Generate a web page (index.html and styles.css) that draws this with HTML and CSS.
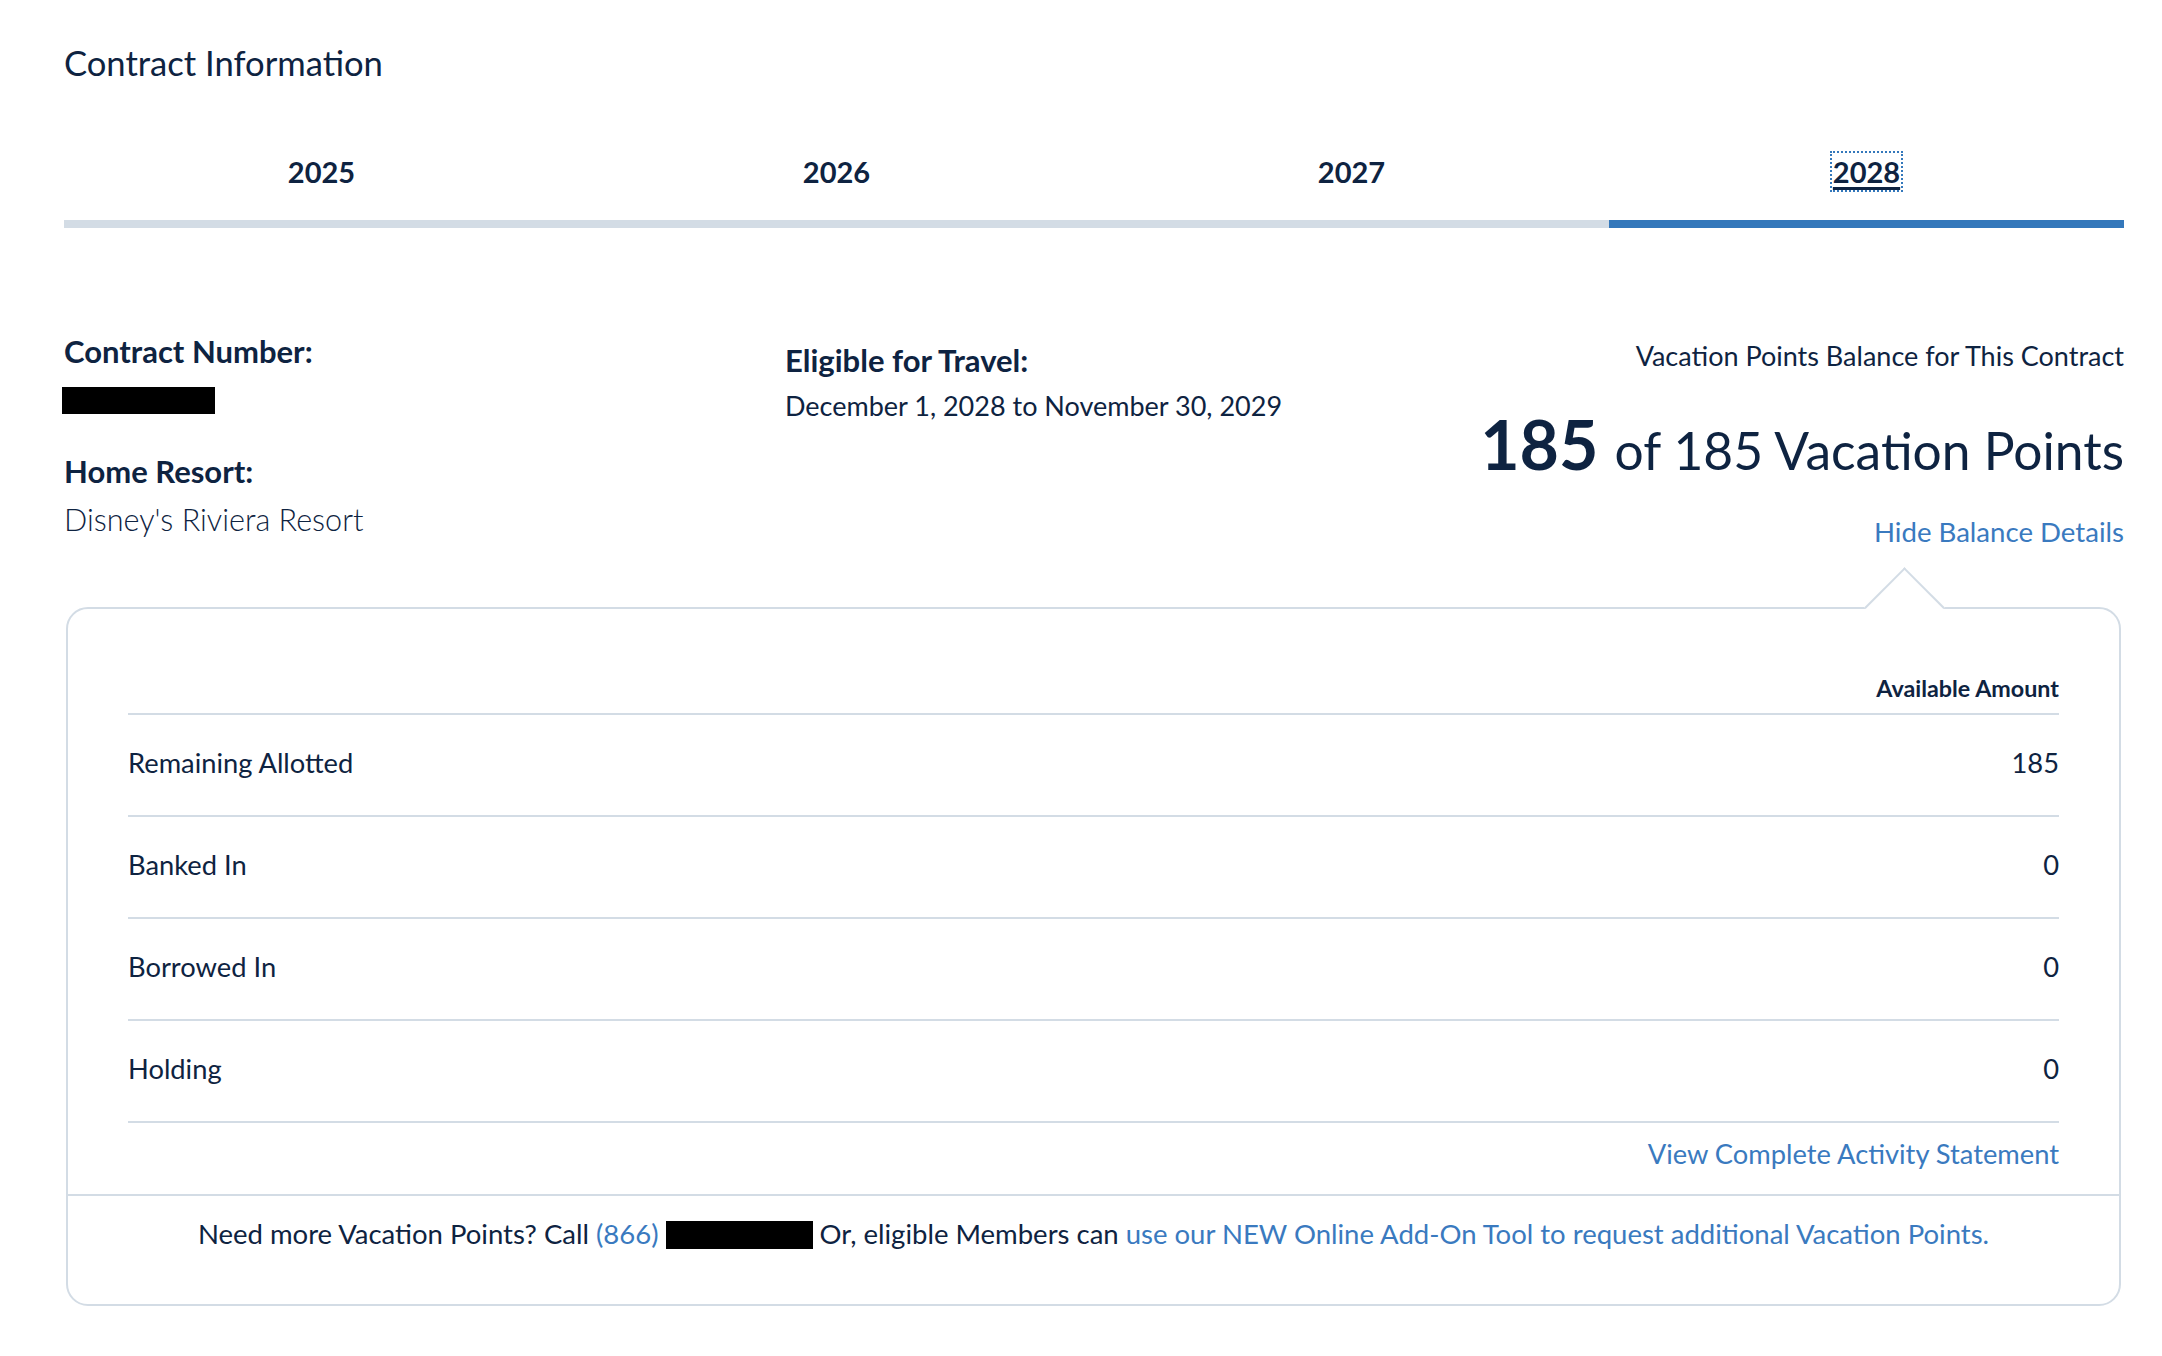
FILE: index.html
```html
<!DOCTYPE html>
<html lang="en">
<head>
    <meta charset="UTF-8">
    <meta name="viewport" content="width=device-width, initial-scale=1.0">
    <title>Contract Information</title>
    <link rel="stylesheet" href="styles.css">
</head>
<body>
    <div class="contract-info">
        <h2 class="page-title">Contract Information</h2>

        <ul class="year-tabs">
            <li><a href="#">2025</a></li>
            <li><a href="#">2026</a></li>
            <li><a href="#">2027</a></li>
            <li class="active"><a href="#">2028</a></li>
        </ul>

        <div class="contract-details">
            <div class="detail-col">
                <div class="detail-label">Contract Number:</div>
                <span class="redacted redacted-number"></span>
                <div class="detail-label home-label">Home Resort:</div>
                <div class="detail-value resort-name">Disney's Riviera Resort</div>
            </div>

            <div class="detail-col travel-col">
                <div class="detail-label">Eligible for Travel:</div>
                <div class="detail-value travel-dates">December 1, 2028 to November 30, 2029</div>
            </div>

            <div class="detail-col balance-col">
                <div class="balance-caption">Vacation Points Balance for This Contract</div>
                <div class="points-total">
                    <strong>185</strong>
                    <span>of 185 Vacation Points</span>
                </div>
                <a href="#" class="link toggle-link">Hide Balance Details</a>
            </div>
        </div>

        <div class="balance-box">
            <span class="box-caret"></span>
            <div class="balance-body">
                <table class="balance-table">
                    <thead>
                        <tr>
                            <th></th>
                            <th>Available Amount</th>
                        </tr>
                    </thead>
                    <tbody>
                        <tr>
                            <td>Remaining Allotted</td>
                            <td>185</td>
                        </tr>
                        <tr>
                            <td>Banked In</td>
                            <td>0</td>
                        </tr>
                        <tr>
                            <td>Borrowed In</td>
                            <td>0</td>
                        </tr>
                        <tr>
                            <td>Holding</td>
                            <td>0</td>
                        </tr>
                    </tbody>
                </table>
                <div class="statement-link">
                    <a href="#" class="link">View Complete Activity Statement</a>
                </div>
            </div>
            <div class="balance-footer">
                Need more Vacation Points? Call <a href="#" class="link">(866)</a>
                <span class="redacted redacted-phone"></span>
                Or, eligible Members can <a href="#" class="link">use our NEW Online Add-On Tool to request additional Vacation Points.</a>
            </div>
        </div>
    </div>
</body>
</html>
```

FILE: styles.css
```css
* {
    margin: 0;
    padding: 0;
    box-sizing: border-box;
}

body {
    font-family: Lato, 'Noto Sans', sans-serif;
    color: #0e2341;
    background: #fff;
}

.contract-info {
    padding: 0 38px 48px 64px;
}

.page-title {
    font-size: 34.6px;
    font-weight: 400;
    line-height: 40px;
    padding-top: 43px;
}

.link {
    color: #3a7abf;
    text-decoration: none;
}

/* year tabs */
.year-tabs {
    display: flex;
    list-style: none;
}

.year-tabs li {
    flex: 1;
    text-align: center;
    padding: 71px 0 30px;
    border-bottom: 8px solid #d3dce5;
    font-size: 29px;
    font-weight: 700;
    line-height: 36px;
}

.year-tabs a {
    color: inherit;
    text-decoration: none;
}

.year-tabs li.active {
    border-bottom-color: #3478bb;
}

.year-tabs li.active a {
    text-decoration: underline;
    text-decoration-thickness: 3px;
    text-underline-offset: 4px;
    outline: 2px dotted #3478bb;
    outline-offset: 1px;
}

/* contract details */
.contract-details {
    display: grid;
    grid-template-columns: 35% 1fr auto;
    margin-top: 105px;
}

.detail-label {
    font-size: 31px;
    font-weight: 700;
    line-height: 36px;
}

.detail-value {
    font-size: 27px;
    line-height: 32px;
}

.redacted {
    display: inline-block;
    background: #000;
}

.redacted-number {
    display: block;
    width: 153px;
    height: 27px;
    margin: 18px 0 0 -2px;
}

.home-label {
    margin-top: 39px;
}

.resort-name {
    font-size: 30.6px;
    line-height: 36px;
    font-weight: 300;
    margin-top: 13px;
}

.travel-col {
    padding-top: 9px;
}

.travel-dates {
    margin-top: 12px;
}

.balance-col {
    padding-top: 7px;
    text-align: right;
}

.balance-caption {
    font-size: 27px;
    line-height: 32px;
}

.points-total {
    display: flex;
    justify-content: flex-end;
    align-items: baseline;
    gap: 16px;
    margin-top: 38px;
}

.points-total strong {
    font-size: 68px;
    line-height: 1;
    font-weight: 700;
}

.points-total span {
    font-size: 51.5px;
    line-height: 1;
}

.toggle-link {
    display: inline-block;
    font-size: 27.6px;
    line-height: 32px;
    margin-top: 38px;
}

/* balance popover */
.balance-box {
    position: relative;
    margin: 59px 3px 0 2px;
    border: 2px solid #d3dce5;
    border-radius: 22px;
}

.box-caret {
    position: absolute;
    top: -30px;
    right: 186px;
    width: 57px;
    height: 57px;
    background: #fff;
    border-top: 2px solid #d3dce5;
    border-left: 2px solid #d3dce5;
    transform: rotate(45deg);
}

.balance-body {
    position: relative;
    padding: 65px 60px 24px;
}

.balance-table {
    width: 100%;
    border-collapse: separate;
    border-spacing: 0;
}

.balance-table th {
    font-size: 23.3px;
    font-weight: 700;
    line-height: 28px;
    text-align: right;
    padding-bottom: 11px;
    border-bottom: 2px solid #d3dce5;
}

.balance-table th:first-child {
    border-top-left-radius: 10px;
}

.balance-table td {
    height: 102px;
    font-size: 27.3px;
    line-height: 32px;
    padding-bottom: 4px;
    border-bottom: 2px solid #d3dce5;
}

.balance-table td:last-child {
    text-align: right;
}

.statement-link {
    text-align: right;
    font-size: 27.3px;
    line-height: 32px;
    margin-top: 15px;
}

.balance-footer {
    border-top: 2px solid #d3dce5;
    padding: 22px 20px 54px;
    text-align: center;
    font-size: 27.5px;
    line-height: 32px;
}

.redacted-phone {
    width: 147px;
    height: 28px;
    vertical-align: -5px;
}
```
